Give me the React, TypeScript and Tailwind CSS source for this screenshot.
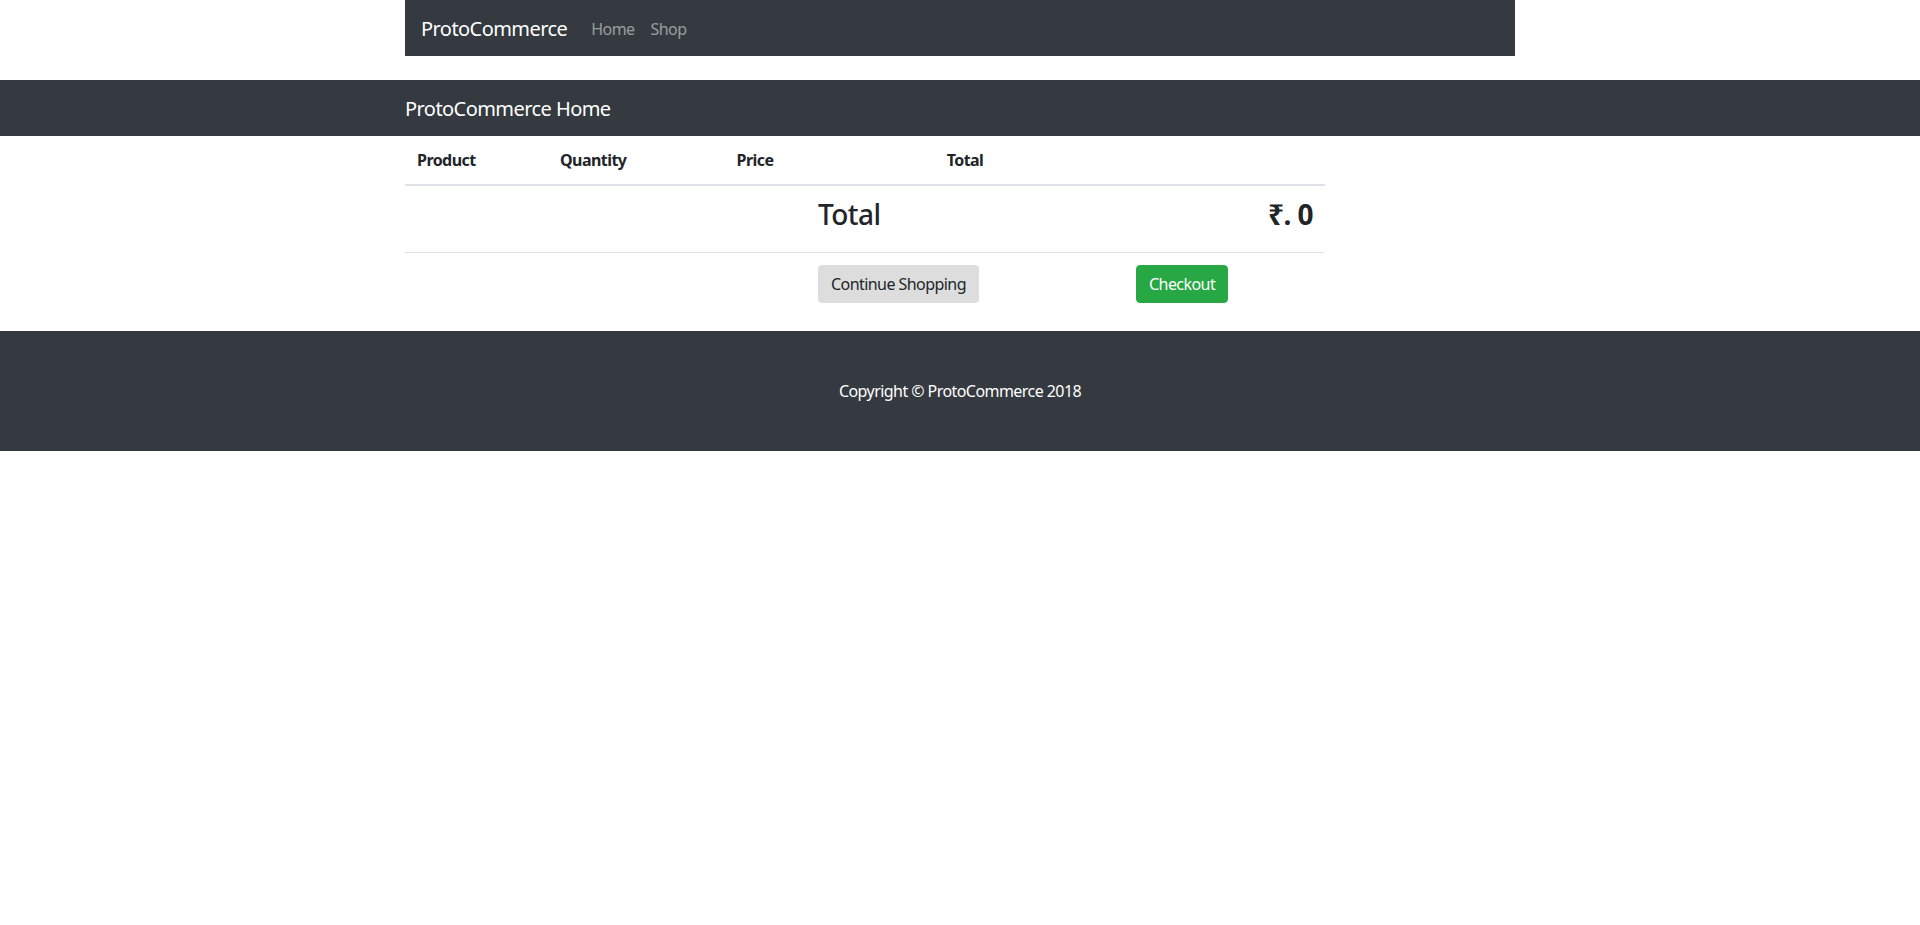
const font = "font-['Noto_Sans','DejaVu_Sans',sans-serif] tracking-[-0.035em]"

function NavBar() {
  return (
    <div className="mx-auto w-[1110px] h-14 bg-[#343a40] flex items-center px-4">
      <span className="text-[20px] leading-[30px] text-white mr-4 pt-px">ProtoCommerce</span>
      <a className="px-2 text-base text-white/50 pt-px">Home</a>
      <a className="px-2 text-base text-white/50 pt-px">Shop</a>
    </div>
  )
}

export default function App() {
  const cols = 'grid grid-cols-[143px_156px_102px_318px_201px]'
  return (
    <div className={`${font} text-[#212529] text-base leading-6 bg-white min-h-[925px]`}>
      <NavBar />

      <div className="mt-6 h-14 bg-[#343a40] flex items-center">
        <div className="mx-auto w-[1110px]">
          <h1 className="text-[20px] text-white pt-px">ProtoCommerce Home</h1>
        </div>
      </div>

      <div className="mx-auto w-[1110px] mb-4">
        <div className="w-[920px]">
          {/* head */}
          <div className={`${cols} border-b-2 border-[#dee2e6] font-bold`}>
            <div className="p-3">Product</div>
            <div className="p-3">Quantity</div>
            <div className="p-3 text-center">Price</div>
            <div className="p-3 text-center">Total</div>
            <div className="p-3" />
          </div>

          {/* total row */}
          <div className={cols}>
            <div className="p-3" />
            <div className="p-3" />
            <div className="p-3" />
            <div className="p-3">
              <h3 className="text-[28px] leading-[1.2] font-medium mb-2">Total</h3>
            </div>
            <div className="p-3 text-right">
              <h3 className="text-[28px] leading-[1.2] font-bold mb-2">₹. 0</h3>
            </div>
          </div>

          {/* buttons */}
          <div className={`${cols} border-t border-[#dee2e6]`}>
            <div className="p-3" />
            <div className="p-3" />
            <div className="p-3" />
            <div className="p-3">
              <button className="h-[38px] px-3 rounded border border-transparent bg-[#dddddd] text-[#212529]">
                Continue Shopping
              </button>
            </div>
            <div className="p-3">
              <button className="h-[38px] px-3 rounded border border-[#28a745] bg-[#28a745] text-white">
                Checkout
              </button>
            </div>
          </div>
        </div>
      </div>

      <footer className="bg-[#343a40] py-12">
        <p className="text-center text-white">Copyright © ProtoCommerce 2018</p>
      </footer>
    </div>
  )
}
